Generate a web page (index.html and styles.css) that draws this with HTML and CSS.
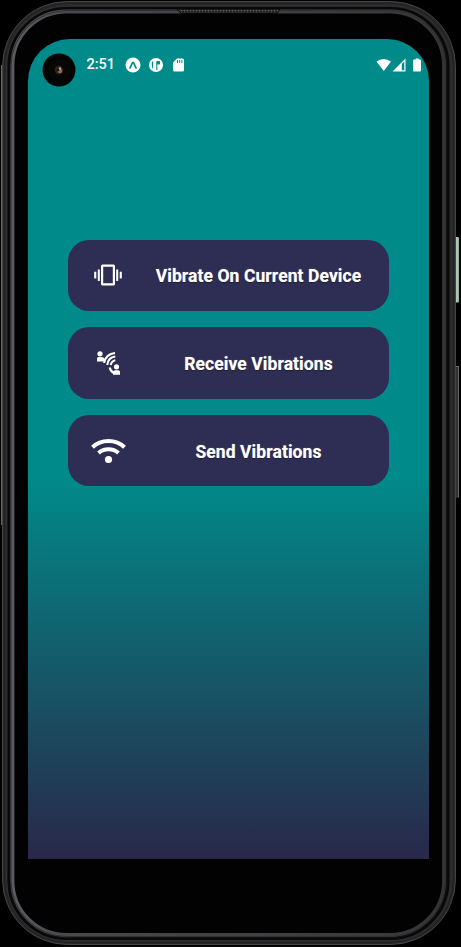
FILE: index.html
```html
<!DOCTYPE html>
<html lang="en">
<head>
<meta charset="utf-8">
<title>Vibrations</title>
<link rel="stylesheet" href="styles.css">
</head>
<body>
<div class="device">
  <svg class="frame" viewBox="0 0 461 947" aria-hidden="true">
    <defs>
      <linearGradient id="edge" x1="0" y1="0" x2="1" y2="0"><stop offset="0" stop-color="#5c5b60"/><stop offset=".12" stop-color="#4a494e"/><stop offset=".9" stop-color="#39393b"/><stop offset="1" stop-color="#343436"/></linearGradient>
      <linearGradient id="power" x1="0" y1="0" x2="1" y2="0"><stop offset="0" stop-color="#77947f"/><stop offset=".4" stop-color="#b1cdb9"/><stop offset="1" stop-color="#91ae9b"/></linearGradient>
      <pattern id="mesh" width="3" height="3" patternUnits="userSpaceOnUse"><rect width="3" height="3" fill="#1c1c1c"/><circle cx="1.5" cy="1.5" r="1" fill="#606060"/></pattern>
    </defs>
    <rect x="455" y="237" width="4" height="65.500" rx="1" fill="url(#power)"/>
    <rect x="454" y="366" width="5" height="132" rx="1" fill="#333"/>
    <path d="M458.500 367V497M455 366.500H459" stroke="#666"/>
    <path d="M1.500 65V525" stroke="#666"/>
    <rect x="2.500" y="1.500" width="453" height="943" rx="65" fill="#292929" stroke="#454344"/>
    <rect x="4.500" y="3.500" width="449" height="939" rx="63" fill="none" stroke="#202020"/>
    <rect x="6.500" y="5.500" width="445" height="935" rx="61" fill="none" stroke="#303031"/>
    <rect x="8.500" y="8" width="440" height="931" rx="58" fill="#111" stroke="#080808" stroke-width="2"/>
    <rect x="12.500" y="11.500" width="431.500" height="923.500" rx="54" fill="#020203" stroke="url(#edge)" stroke-width="3.800"/>
    <rect x="11" y="10.500" width="434.500" height="926" rx="56" fill="none" stroke="#303032"/>
    <path d="M177 9H280L277 13.500H181Z" fill="url(#mesh)" stroke="#080808"/>
  </svg>
  <main class="screen">
    <header class="status">
      <span class="camera"><svg viewBox="0 0 34 34"><circle cx="17" cy="17" r="16.500" fill="#030303"/><circle cx="17" cy="17" r="11" fill="#080707"/><circle cx="17" cy="17" r="4.200" fill="#302521"/><circle cx="18" cy="18" r="2.200" fill="#8a6c5a"/><circle cx="18" cy="15.500" r="1.200" fill="#c0a08b"/><circle cx="16" cy="17" r="1.300" fill="#181313"/></svg></span>
      <time class="time">2:51</time>
      <svg class="dot-icon" viewBox="0 0 16 16"><circle cx="8" cy="8" r="7.500" fill="#fff"/><path d="M5 10.800C6.200 9.500 6.900 5.300 8 5.300S9.800 9.500 11 10.800" fill="none" stroke="#008b8a" stroke-width="1.800" stroke-linecap="round"/></svg>
      <svg class="dot-icon second" viewBox="0 0 16 16"><circle cx="8" cy="8" r="7" fill="#fff"/><path d="M4 4.500H5.200V12.200Q3.200 10.500 4 4.500Z" fill="#008b8a"/><rect x="8.300" y="4" width="3.700" height="3.500" rx=".8" fill="#008b8a"/><path d="M8.800 7V13" stroke="#008b8a" stroke-width="1.100"/></svg>
      <svg class="card-icon" viewBox="0 0 11 14"><path d="M4 .5H9.500Q11 .5 11 2V12Q11 13.500 9.500 13.500H1.500Q0 13.500 0 12V4.500Z" fill="#fff"/><path d="M4.500 2V5M6.700 2V5M8.900 2V5" stroke="#008b8a" stroke-width="1"/></svg>
      <svg class="system-icons" viewBox="0 0 46 14" fill="#fff"><path d="M.5 3.500Q7.500-1.500 15 3.500L7.800 13Z"/><path d="M29.500 .5V13.500H16.500ZM25.800 6V12.300H28.300V3.400Z" fill-rule="evenodd"/><path d="M38.500 1.500H39.700V.5H42.800V1.500H44Q45 1.500 45 2.500V12.500Q45 13.500 44 13.500H38Q37 13.500 37 12.500V2.500Q37 1.500 38 1.500Z"/></svg>
    </header>
    <nav class="actions">
      <button class="action">
        <svg class="icon" viewBox="0 0 36 36" fill="#fff"><path fill-rule="evenodd" d="M12.500 7.500H23.500Q25 7.500 25 9V27Q25 28.500 23.500 28.500H12.500Q11 28.500 11 27V9Q11 7.500 12.500 7.500ZM13.200 9.700V26.300H22.800V9.700Z"/><path d="M4.200 14.700H6.300V21.500H4.200ZM7.800 12.400H9.800V24H7.800ZM26.200 12.400H28.200V24H26.200ZM29.700 14.700H31.800V21.500H29.700Z"/></svg>
        <span class="label">Vibrate On Current Device</span>
      </button>
      <button class="action">
        <svg class="icon" viewBox="0 0 36 36" fill="#fff"><circle cx="10" cy="8.800" r="2.600"/><path d="M7 16.500V13.300Q7 12 9.500 12Q14 12 14 13.300V16.500ZM23 29.800V27Q23 25.300 25.500 25.300H28Q30 25.300 30 27V29.800Z"/><circle cx="26.500" cy="21.800" r="2.600"/><path d="M14.200 18C14.700 12.500 19 8.500 25 8M17.300 20C17.800 15 21 12 25.300 11.500M20.700 20Q21.500 16 25.300 15.200M19.700 22.500Q20.500 26.500 24 28" fill="none" stroke="#fff" stroke-width="2.100"/></svg>
        <span class="label">Receive Vibrations</span>
      </button>
      <button class="action">
        <svg class="icon" viewBox="0 0 36 36"><path d="M2.500 14.200C11 5.900 26 5.900 34.500 14.200M8.500 20C14 14.900 23 14.900 28.500 20" fill="none" stroke="#fff" stroke-width="4"/><circle cx="18.500" cy="26.500" r="3.600" fill="#fff"/></svg>
        <span class="label">Send Vibrations</span>
      </button>
    </nav>
  </main>
</div>
</body>
</html>
```

FILE: styles.css
```css
* { box-sizing: border-box; }
body { margin: 0; background: #000; color: #fff; font-family: Roboto, sans-serif; overflow: hidden; }
.device { position: relative; width: 461px; height: 947px; padding: 39px 32px 88px 28px; }
.frame { position: absolute; inset: 0; width: 461px; height: 947px; }
.screen { position: relative; height: 820px; overflow: hidden; border-radius: 42px 42px 0 0; background: linear-gradient(#008b8a 0 53%, #292849 100%); }
.status { display: flex; align-items: center; height: 51px; padding: 0 7px 0 14px; }
.camera { width: 34px; height: 34px; margin-top: 10px; }
svg { display: block; flex: none; }
.time { width: 29.5px; margin-left: 10.5px; font-size: 14.5px; font-weight: 500; line-height: 20px; }
.dot-icon { width: 16px; height: 16px; margin-left: 9px; }
.second { margin-left: 6.5px; }
.card-icon { width: 11px; height: 14px; margin-left: 9px; }
.system-icons { width: 46px; height: 14px; margin-left: auto; }
.actions { display: flex; flex-direction: column; gap: 16.5px; padding: 149.5px 40px 0; }
.action { display: flex; align-items: center; height: 71.3px; padding: 0 0 0 22px; border: 0; border-radius: 21px; background: #2e2d54; color: #fff; font-family: inherit; }
.icon { width: 36px; height: 36px; }
.label { flex: 1; padding: 2px 0 0 2px; font-size: 17.5px; font-weight: 700; line-height: 24px; letter-spacing: .08px; text-align: center; text-shadow: 0 0 1px #fff8, 0 1px 1px #0009; }
```
